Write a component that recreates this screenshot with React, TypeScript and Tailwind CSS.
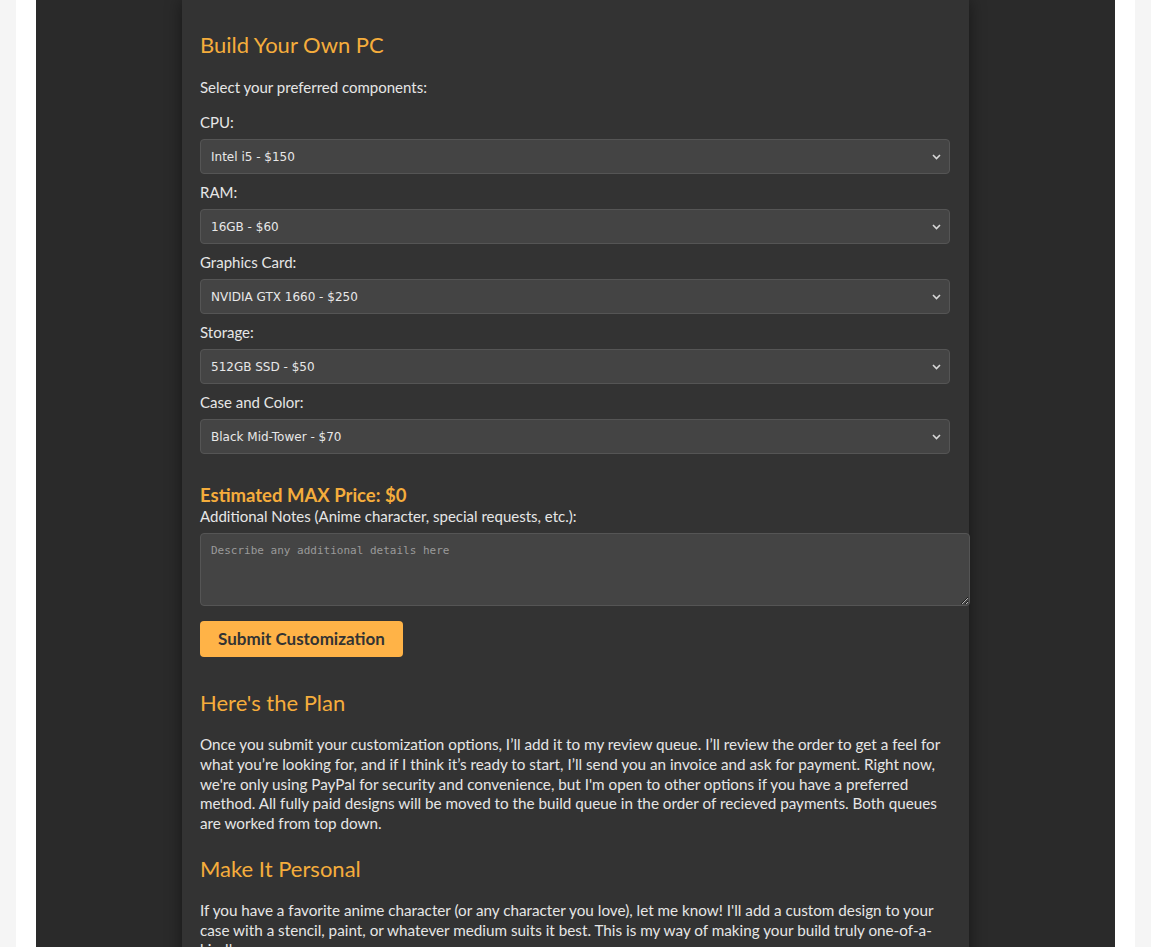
import { useState } from 'react'

interface PartOption {
  label: string
  price: number
}

interface Part {
  name: string
  options: PartOption[]
}

const parts: Part[] = [
  { name: 'CPU', options: [{ label: 'Intel i5', price: 150 }, { label: 'Intel i7', price: 250 }, { label: 'AMD Ryzen 5', price: 140 }] },
  { name: 'RAM', options: [{ label: '16GB', price: 60 }, { label: '32GB', price: 110 }] },
  { name: 'Graphics Card', options: [{ label: 'NVIDIA GTX 1660', price: 250 }, { label: 'NVIDIA RTX 3060', price: 350 }] },
  { name: 'Storage', options: [{ label: '512GB SSD', price: 50 }, { label: '1TB SSD', price: 90 }] },
  { name: 'Case and Color', options: [{ label: 'Black Mid-Tower', price: 70 }, { label: 'White Mid-Tower', price: 75 }] },
]

function Chevron() {
  return (
    <svg width="9" height="6" viewBox="0 0 9 6" className="pointer-events-none absolute right-[9px] top-[15px]">
      <path d="M1 1 L4.5 4.5 L8 1" fill="none" stroke="#d8d8d8" strokeWidth="1.6" />
    </svg>
  )
}

export default function App() {
  const [notes, setNotes] = useState('')
  const [total] = useState(0)

  return (
    <div className="min-h-screen bg-[#f5f5f5] px-4 font-['Lato','Liberation_Sans',sans-serif]">
      <div className="bg-white px-5">
        <div className="flex min-h-[947px] justify-center bg-[#2a2a2a]">
          <div className="w-[787px] bg-[#333333] px-[18px] pt-[30px] pb-10 text-[15px] text-[#e6e6e6] shadow-[0_0_16px_rgba(0,0,0,0.45)]">
            <h2 className="text-[22px] leading-[29px] text-[#f5ad3c]">Build Your Own PC</h2>
            <p className="mt-[18px] leading-5">Select your preferred components:</p>

            <div className="mt-[15px]">
              {parts.map((part) => (
                <div key={part.name} className="mb-2">
                  <label className="block leading-5">{part.name}:</label>
                  <div className="relative mt-[7px] w-[750px]">
                    <select className="h-[35px] w-full appearance-none rounded-[4px] border border-[#555] bg-[#444] pl-[10px] text-[12px] text-[#e8e8e8] outline-none font-['DejaVu_Sans','Liberation_Sans',sans-serif]">
                      {part.options.map((opt) => (
                        <option key={opt.label}>{opt.label} - ${opt.price}</option>
                      ))}
                    </select>
                    <Chevron />
                  </div>
                </div>
              ))}
            </div>

            <h3 className="mt-[30px] text-[18.5px] font-bold leading-[22px] text-[#f5ad3c]">Estimated MAX Price: ${total}</h3>
            <label className="block leading-5">Additional Notes (Anime character, special requests, etc.):</label>
            <textarea
              value={notes}
              onChange={(e) => setNotes(e.target.value)}
              placeholder="Describe any additional details here"
              className="mt-[7px] block h-[73px] w-[770px] rounded-[4px] border border-[#555] bg-[#444] px-[10px] py-[9px] text-[11px] text-[#e0e0e0] placeholder:text-[#9a9a9a] outline-none font-['DejaVu_Sans_Mono','Liberation_Mono',monospace]"
            />

            <button className="mt-[15px] h-9 rounded-[4px] bg-[#ffb347] px-[18px] text-[17px] font-bold text-[#333]">
              Submit Customization
            </button>

            <h2 className="mt-[31px] text-[22px] leading-[29px] text-[#f5ad3c]">Here's the Plan</h2>
            <p className="mt-[18px] text-[15.25px] leading-[19.75px]">
              Once you submit your customization options, I’ll add it to my review queue. I’ll review the order to get a feel for what you’re looking for, and if I think it’s ready to start, I’ll send you an invoice and ask for payment. Right now, we're only using PayPal for security and convenience, but I'm open to other options if you have a preferred method. All fully paid designs will be moved to the build queue in the order of recieved payments. Both queues are worked from top down.
            </p>

            <h2 className="mt-5 text-[22px] leading-[29px] text-[#f5ad3c]">Make It Personal</h2>
            <p className="mt-[18px] text-[15.25px] leading-[19.75px]">
              If you have a favorite anime character (or any character you love), let me know! I'll add a custom design to your case with a stencil, paint, or whatever medium suits it best. This is my way of making your build truly one-of-a-kind!
            </p>
          </div>
        </div>
      </div>
    </div>
  )
}
